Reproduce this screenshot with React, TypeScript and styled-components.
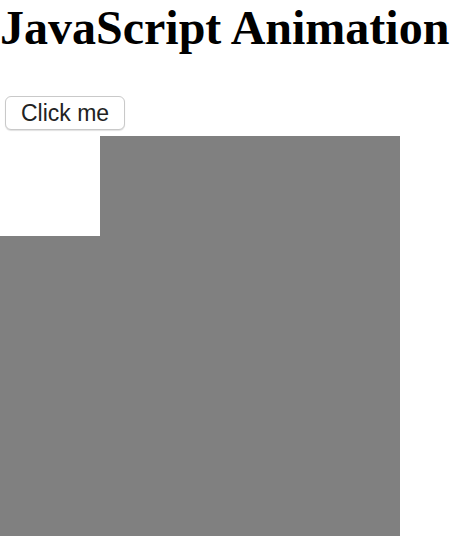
import React from "react";
import styled, { createGlobalStyle } from "styled-components";

const Global = createGlobalStyle`
  html, body { margin: 0; padding: 0; background: #ffffff; }
  body { font-family: "Liberation Serif", "Times New Roman", serif; }
`;

const Title = styled.h1`
  margin: 0 0 40px;
  font-family: "Liberation Serif", "Times New Roman", serif;
  font-weight: bold;
  font-size: 48px;
  line-height: 56px;
  color: #000;
`;

const Button = styled.button`
  display: block;
  margin: 0 0 6px 5px;
  width: 120px;
  height: 34px;
  padding: 0;
  font-family: "Liberation Sans", Arial, sans-serif;
  font-size: 23px;
  color: #222;
  background: #ffffff;
  border: 1px solid #c9c9c9;
  border-radius: 6px;
  box-shadow: 0 1px 1px rgba(0, 0, 0, 0.12);
`;

const Container = styled.div`
  width: 400px;
  height: 400px;
  background: #808080;
`;

const Box = styled.div`
  width: 100px;
  height: 100px;
  background: #ffffff;
`;

export default function App() {
  return (
    <>
      <Global />
      <Title>JavaScript Animation</Title>
      <Button>Click me</Button>
      <Container>
        <Box />
      </Container>
    </>
  );
}
